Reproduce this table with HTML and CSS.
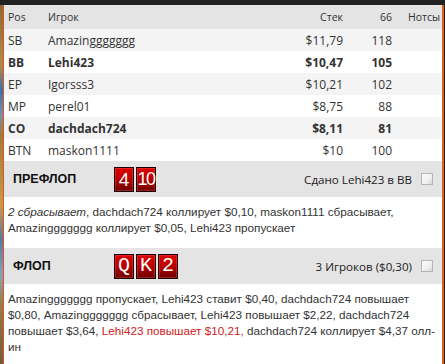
FILE: index.html
```html
<!DOCTYPE html>
<html lang="ru">
<head>
<meta charset="utf-8">
<link rel="stylesheet" href="styles.css">
</head>
<body>
<div class="topbar"></div>
<div class="frame">
  <div class="strip"></div>
  <div class="panel">
    <div class="row head">
      <div>Pos</div><div>Игрок</div><div class="r">Стек</div><div class="r">66</div><div class="notes">Нотсы</div>
    </div>
    <div class="row alt"><div>SB</div><div>Amazinggggggg</div><div class="r">$11,79</div><div class="r">118</div><div class="notes"></div></div>
    <div class="row bold"><div>BB</div><div>Lehi423</div><div class="r">$10,47</div><div class="r">105</div><div class="notes"></div></div>
    <div class="row alt"><div>EP</div><div>Igorsss3</div><div class="r">$10,21</div><div class="r">102</div><div class="notes"></div></div>
    <div class="row"><div>MP</div><div>perel01</div><div class="r">$8,75</div><div class="r">88</div><div class="notes"></div></div>
    <div class="row alt bold"><div>CO</div><div>dachdach724</div><div class="r">$8,11</div><div class="r">81</div><div class="notes"></div></div>
    <div class="row"><div>BTN</div><div>maskon1111</div><div class="r">$10</div><div class="r">100</div><div class="notes"></div></div>

    <div class="street">
      <div class="title">ПРЕФЛОП</div>
      <div class="cards">
        <span class="card sans">4</span><span class="card sans narrow">10</span>
      </div>
      <div class="info">Сдано Lehi423 в BB</div>
      <span class="check"></span>
    </div>
    <div class="actions"><em>2 сбрасывает</em>, dachdach724 коллирует $0,10, maskon1111 сбрасывает, Amazinggggggg коллирует $0,05, Lehi423 пропускает</div>

    <div class="street">
      <div class="title">ФЛОП</div>
      <div class="cards">
        <span class="card mono">Q</span><span class="card mono">K</span><span class="card mono">2</span>
      </div>
      <div class="info">3 Игроков ($0,30)</div>
      <span class="check"></span>
    </div>
    <div class="actions">Amazinggggggg пропускает, Lehi423 ставит $0,40, dachdach724 повышает $0,80, Amazinggggggg сбрасывает, Lehi423 повышает $2,22, dachdach724 повышает $3,64, <span class="hero">Lehi423 повышает $10,21,</span> dachdach724 коллирует $4,37 олл-ин</div>
  </div>
</div>
</body>
</html>
```

FILE: styles.css
```css
html, body {
  margin: 0;
  padding: 0;
  height: 100%;
  background: #1f1f1f;
  overflow: hidden;
}
body {
  font-family: "Open Sans", "Noto Sans", sans-serif;
  font-size: 12px;
  color: #333;
}
.topbar {
  height: 5px;
  background: #222;
}
.frame {
  display: flex;
  height: 359px;
}
.strip {
  width: 3px;
  flex: none;
  background: linear-gradient(180deg, #8a6a3a 0px, #b08a4a 60px, #3d6fb0 85px, #7a8fa8 110px, #a07a3c 130px, #c79a4c 200px, #5a78a0 235px, #8aa0b8 270px, #9a7a4a 300px, #6a5a3a 364px);
}
.panel {
  flex: 1;
  background: #fff;
  border-left: 1px solid #d9571c;
  border-right: 2px solid #e0601a;
  margin-right: 1px;
  overflow: hidden;
}
.row {
  display: grid;
  grid-template-columns: 40px 215px 80px 49px 50px;
  padding-left: 4px;
  height: 22px;
  align-items: center;
  white-space: nowrap;
}
.row.head {
  height: 24px;
  background: #e4e4e4;
  font-size: 10.5px;
  color: #333;
}
.row.alt {
  background: #f4f4f4;
}
.row.bold {
  font-weight: bold;
}
.r {
  text-align: right;
}
.notes {
  padding-left: 16px;
}
.street {
  display: flex;
  align-items: center;
  height: 36px;
  background: #e4e4e4;
  padding: 0 9px 0 9px;
}
.title {
  width: 101px;
  font-family: "Liberation Sans", Arial, sans-serif;
  font-weight: bold;
  font-size: 12.5px;
  color: #111;
}
.cards {
  display: flex;
  gap: 2px;
  flex: 1;
}
.card {
  box-sizing: border-box;
  width: 20px;
  height: 25px;
  border: 1px solid #1a0000;
  background: linear-gradient(180deg, #e00000 0%, #b80000 50%, #6e0000 100%);
  box-shadow: inset 0 0 0 1px rgba(255, 110, 110, 0.3);
  color: #fff;
  display: flex;
  align-items: center;
  justify-content: center;
  font-size: 19px;
  line-height: 1;
}
.card.sans {
  font-family: "Liberation Sans Narrow", "Liberation Sans", sans-serif;
}
.card.narrow {
  letter-spacing: -1.5px;
  font-size: 18px;
}
.card.mono {
  font-family: "Liberation Mono", "DejaVu Sans Mono", monospace;
  font-size: 20px;
}
.info {
  font-size: 11.6px;
  color: #222;
  margin-right: 9px;
}
.check {
  box-sizing: border-box;
  width: 12px;
  height: 12px;
  border: 1px solid #b5b5b5;
  background: linear-gradient(135deg, #fbfbfb 0%, #f0f0f0 60%, #d6d6d6 100%);
}
.actions {
  padding: 7px 4px 12px 4px;
  font-family: "Liberation Sans", Arial, sans-serif;
  font-size: 11.7px;
  line-height: 16px;
  color: #333;
}
.actions em {
  font-style: italic;
}
.hero {
  color: #d0201a;
}
```
